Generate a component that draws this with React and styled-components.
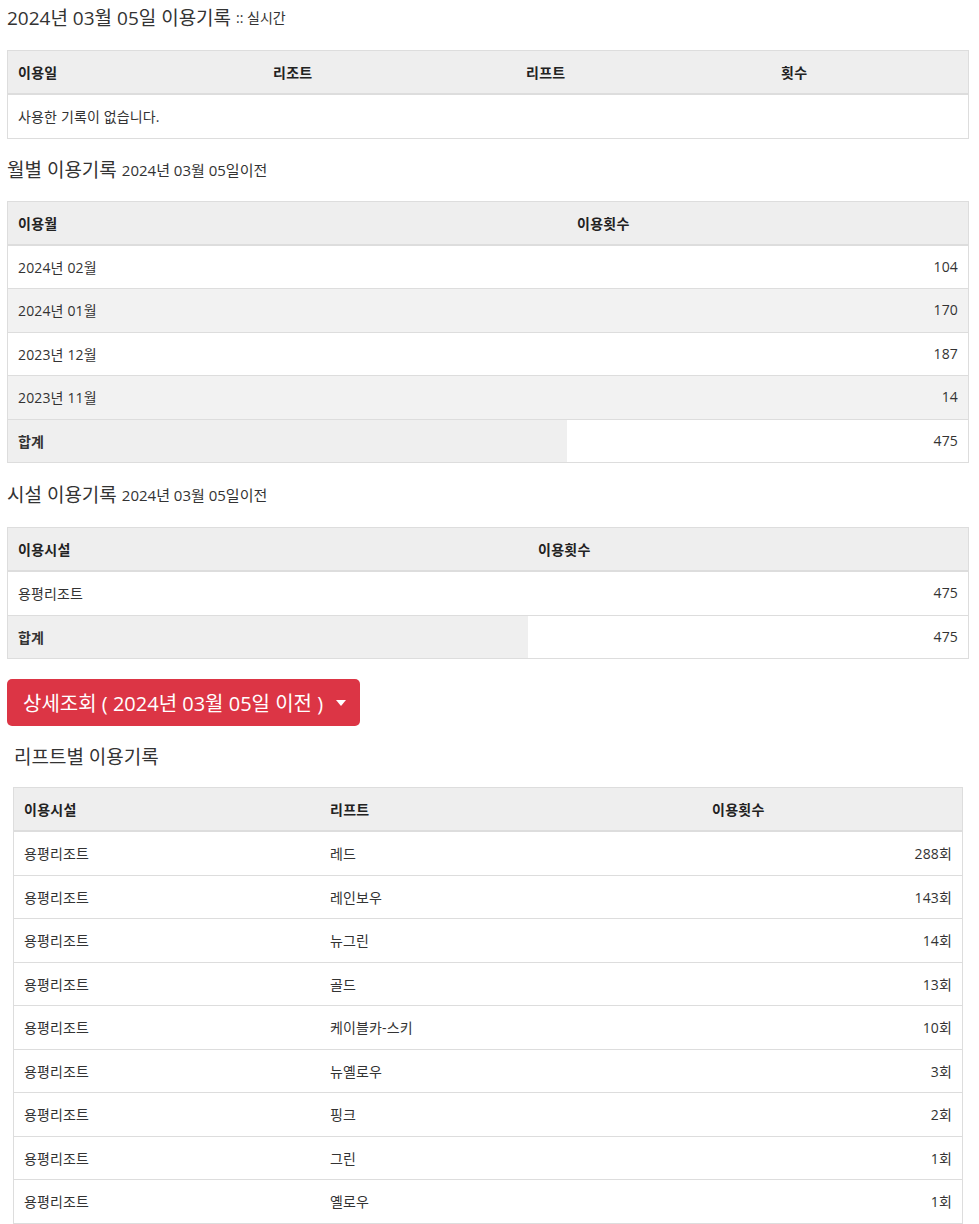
import React from "react";
import styled, { createGlobalStyle } from "styled-components";

const GlobalStyle = createGlobalStyle`
  body {
    margin: 0;
    background: #fff;
    color: #333;
    font-family: "Segoe UI", "Open Sans", "Noto Sans CJK KR", sans-serif;
    font-size: 14px;
  }
`;

const Page = styled.div`
  padding: 0 10px 0 7px;
`;

const Title = styled.h3`
  margin: 0;
  font-size: 19px;
  font-weight: 400;
  line-height: 36px;
  height: ${(p) => p.$h || 50}px;
  padding-left: ${(p) => p.$indent || 0}px;
  display: flex;
  align-items: ${(p) => (p.$top ? "flex-start" : "center")};
  small {
    font-size: ${(p) => p.$small || 15}px;
    margin-left: 5px;
  }
`;

const Table = styled.table`
  width: calc(100% - ${(p) => p.$inset || 0}px);
  margin-left: ${(p) => p.$inset / 2 || 0}px;
  border-collapse: collapse;
  border: 1px solid #ddd;
  table-layout: fixed;
`;

const Th = styled.th`
  background: #eeeeee;
  font-weight: 700;
  text-align: left;
  padding: 0 10px;
  height: 42px;
  border-bottom: 2px solid #ddd;
  width: ${(p) => p.$w || "auto"};
  color: #222;
  letter-spacing: 0.3px;
`;

const Tr = styled.tr`
  background: ${(p) => (p.$odd ? "#f2f2f2" : "#fff")};
  border-top: 1px solid #ddd;
`;

const Td = styled.td`
  padding: 0 10px;
  height: 42.5px;
  text-align: ${(p) => (p.$right ? "right" : "left")};
  font-weight: ${(p) => (p.$bold ? 700 : 400)};
  background: ${(p) => (p.$shade ? "#efefef" : "inherit")};
  letter-spacing: 0.15px;
`;

const Row = styled.div`
  display: flex;
  justify-content: space-between;
`;

const DropButton = styled.button`
  display: inline-flex;
  align-items: center;
  gap: 11px;
  height: 47px;
  padding: 0 14px 0 16px;
  background: #dc3545;
  color: #fff;
  border: none;
  border-radius: 5px;
  font-family: inherit;
  font-size: 20px;
  margin-top: 20px;
  cursor: pointer;
`;

const Caret = styled.span`
  width: 0;
  height: 0;
  border-left: 5px solid transparent;
  border-right: 5px solid transparent;
  border-top: 6px solid #fff;
  margin-left: 2px;
`;

const months = [
  ["2024년 02월", 104],
  ["2024년 01월", 170],
  ["2023년 12월", 187],
  ["2023년 11월", 14],
];

const lifts = [
  ["레드", 288],
  ["레인보우", 143],
  ["뉴그린", 14],
  ["골드", 13],
  ["케이블카-스키", 10],
  ["뉴옐로우", 3],
  ["핑크", 2],
  ["그린", 1],
  ["옐로우", 1],
];

const App = () => {
  return (
    <Page>
      <GlobalStyle />
      <Title $h={50} $top $small={14}>
        2024년 03월 05일 이용기록 <small>:: 실시간</small>
      </Title>
      <Table>
        <thead>
          <tr>
            <Th $w="235px">이용일</Th>
            <Th $w="233px">리조트</Th>
            <Th $w="235px">리프트</Th>
            <Th>횟수</Th>
          </tr>
        </thead>
        <tbody>
          <Tr>
            <Td colSpan={4}>사용한 기록이 없습니다.</Td>
          </Tr>
        </tbody>
      </Table>

      <Title $h={62}>
        월별 이용기록 <small>2024년 03월 05일이전</small>
      </Title>
      <Table>
        <thead>
          <tr>
            <Th $w="539px">이용월</Th>
            <Th>이용횟수</Th>
          </tr>
        </thead>
        <tbody>
          {months.map(([m, n], i) => (
            <Tr key={m} $odd={i % 2 === 1}>
              <Td colSpan={2}>
                <Row>
                  <span>{m}</span>
                  <span>{n}</span>
                </Row>
              </Td>
            </Tr>
          ))}
          <Tr>
            <Td $bold $shade>
              합계
            </Td>
            <Td $right>475</Td>
          </Tr>
        </tbody>
      </Table>

      <Title $h={64}>
        시설 이용기록 <small>2024년 03월 05일이전</small>
      </Title>
      <Table>
        <thead>
          <tr>
            <Th $w="500px">이용시설</Th>
            <Th>이용횟수</Th>
          </tr>
        </thead>
        <tbody>
          <Tr>
            <Td colSpan={2}>
              <Row>
                <span>용평리조트</span>
                <span>475</span>
              </Row>
            </Td>
          </Tr>
          <Tr>
            <Td $bold $shade>
              합계
            </Td>
            <Td $right>475</Td>
          </Tr>
        </tbody>
      </Table>

      <DropButton>
        상세조회 ( 2024년 03월 05일 이전 ) <Caret />
      </DropButton>

      <Title $h={61} $indent={7}>
        리프트별 이용기록
      </Title>
      <Table $inset={12}>
        <thead>
          <tr>
            <Th $w="286px">이용시설</Th>
            <Th $w="362px">리프트</Th>
            <Th>이용횟수</Th>
          </tr>
        </thead>
        <tbody>
          {lifts.map(([name, n]) => (
            <Tr key={name}>
              <Td>용평리조트</Td>
              <Td>{name}</Td>
              <Td $right>{n}회</Td>
            </Tr>
          ))}
        </tbody>
      </Table>
    </Page>
  );
};

export default App;
